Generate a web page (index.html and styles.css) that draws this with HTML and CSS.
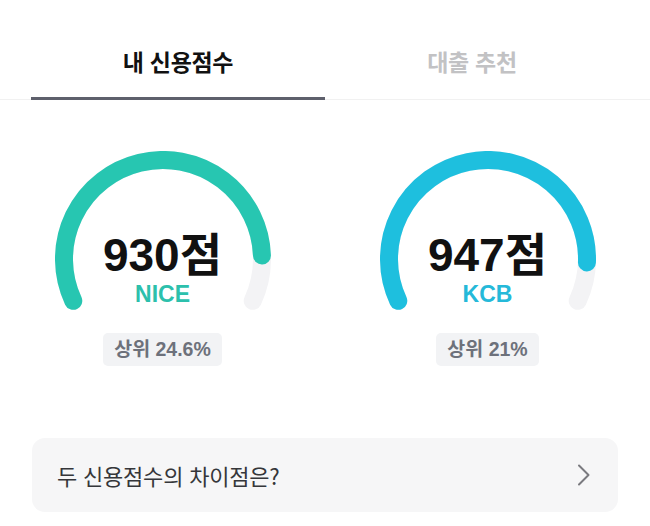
FILE: index.html
```html
<!DOCTYPE html>
<html lang="ko">
<head>
<meta charset="utf-8">
<title>내 신용점수</title>
<link rel="stylesheet" href="styles.css">
</head>
<body>
<div class="page">
  <nav class="tabs">
    <div class="tab active">내 신용점수</div>
    <div class="tab">대출 추천</div>
  </nav>

  <section class="scores">
    <div class="score-col">
      <div class="gauge">
        <svg class="gauge-svg" width="216" height="160" viewBox="0 0 216 160">
          <path d="M18.28 149.84 A99 99 0 1 1 197.72 149.84" fill="none" stroke="#f3f3f5" stroke-width="18" stroke-linecap="round"/>
          <path d="M18.28 149.84 A99 99 0 1 1 206.94 104.54" fill="none" stroke="#27c6b1" stroke-width="18" stroke-linecap="round"/>
        </svg>
        <div class="gauge-text">
          <div class="score">930점</div>
          <div class="agency nice">NICE</div>
        </div>
      </div>
      <div class="rank">상위 24.6%</div>
    </div>

    <div class="score-col">
      <div class="gauge">
        <svg class="gauge-svg" width="216" height="160" viewBox="0 0 216 160">
          <path d="M18.28 149.84 A99 99 0 1 1 197.72 149.84" fill="none" stroke="#f3f3f5" stroke-width="18" stroke-linecap="round"/>
          <path d="M18.28 149.84 A99 99 0 1 1 206.94 111.46" fill="none" stroke="#1ebfde" stroke-width="18" stroke-linecap="round"/>
        </svg>
        <div class="gauge-text">
          <div class="score">947점</div>
          <div class="agency kcb">KCB</div>
        </div>
      </div>
      <div class="rank">상위 21%</div>
    </div>
  </section>

  <a class="info-card" href="#">
    <span class="info-text">두 신용점수의 차이점은?</span>
    <svg class="chevron" width="14" height="22" viewBox="0 0 14 22">
      <path d="M2 1.5 L11.5 11 L2 20.5" fill="none" stroke="#7a7a7f" stroke-width="2" stroke-linecap="round" stroke-linejoin="round"/>
    </svg>
  </a>
</div>
</body>
</html>
```

FILE: styles.css
```css
* {
  box-sizing: border-box;
}

html, body {
  margin: 0;
  padding: 0;
  background: #ffffff;
}

body {
  font-family: "Liberation Sans", "Noto Sans CJK KR", sans-serif;
  color: #111111;
}

.page {
  width: 650px;
}

.tabs {
  display: grid;
  grid-template-columns: 1fr 1fr;
  padding: 0 31px;
  border-bottom: 1px solid #f1f1f1;
}

.tab {
  font-family: "Noto Sans CJK KR", sans-serif;
  font-size: 23px;
  font-weight: 700;
  line-height: 30px;
  text-align: center;
  padding-top: 46px;
  padding-bottom: 21px;
  border-bottom: 3px solid transparent;
  color: #c2c2c4;
  margin-bottom: -1px;
  letter-spacing: -0.3px;
}

.tab.active {
  color: #111111;
  border-bottom-color: #5e606c;
}

.scores {
  display: grid;
  grid-template-columns: 1fr 1fr;
  margin-top: 51px;
}

.score-col {
  display: flex;
  flex-direction: column;
  align-items: center;
}

.gauge {
  display: grid;
  width: 216px;
  height: 160px;
}

.gauge-svg,
.gauge-text {
  grid-area: 1 / 1;
}

.gauge-svg {
  display: block;
}

.gauge-text {
  display: flex;
  flex-direction: column;
  align-items: center;
  padding-top: 81px;
}

.score {
  font-size: 46px;
  font-weight: 700;
  line-height: 46px;
  color: #111111;
  letter-spacing: 0;
}

.agency {
  font-size: 23px;
  font-weight: 700;
  line-height: 23px;
  margin-top: 5px;
}

.agency.nice {
  color: #2cc0ac;
}

.agency.kcb {
  color: #25b9d9;
}

.rank {
  margin-top: 22px;
  height: 33px;
  padding: 0 11px;
  border-radius: 5px;
  background: #f2f3f5;
  color: #6d717b;
  font-size: 19.5px;
  font-weight: 700;
  line-height: 33px;
}

.info-card {
  display: flex;
  align-items: center;
  justify-content: space-between;
  margin: 72px 32px 0;
  height: 74px;
  padding: 0 27px 0 25px;
  border-radius: 13px;
  background: #f6f6f7;
  text-decoration: none;
}

.info-text {
  font-family: "Noto Sans CJK KR", sans-serif;
  font-size: 22px;
  font-weight: 400;
  color: #35363a;
  letter-spacing: -0.2px;
}

.chevron {
  display: block;
}
```
